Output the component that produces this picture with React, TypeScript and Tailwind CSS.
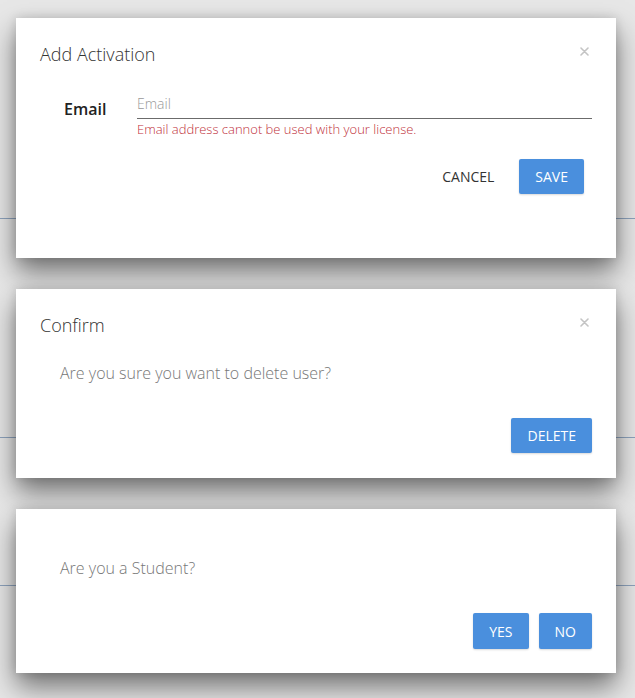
import React from 'react'

const font = { fontFamily: '"Open Sans", "Liberation Sans", sans-serif' }

function CloseX() {
  return (
    <button className="mt-[-6px] flex h-4 w-4 items-center justify-center">
      <svg width="9" height="9" viewBox="0 0 9 9">
        <path d="M1 1L8 8M8 1L1 8" stroke="#c4c4c4" strokeWidth="1.6" strokeLinecap="round" />
      </svg>
    </button>
  )
}

function Btn({ children, className = '' }: { children: React.ReactNode; className?: string }) {
  return (
    <button
      className={`h-[35px] rounded-[2px] bg-[#4a8fdd] px-4 text-[14px] uppercase text-white shadow-[0_1px_2px_rgba(0,0,0,0.15)] ${className}`}
    >
      {children}
    </button>
  )
}

function Card({ children, className = '' }: { children: React.ReactNode; className?: string }) {
  return (
    <div
      className={`relative z-10 mx-4 w-[600px] bg-white shadow-[0_14px_26px_rgba(0,0,0,0.5),0_0_10px_rgba(0,0,0,0.14)] ${className}`}
    >
      {children}
    </div>
  )
}

export default function App() {
  return (
    <div
      style={font}
      className="relative min-h-[698px] w-[635px] overflow-hidden bg-[#e7e7e7] pt-[18px]"
    >
      {/* page behind the dialogs */}
      <div className="absolute left-0 top-[218px] h-px w-full bg-[#8ea3bd]" />
      <div className="absolute left-0 top-[437px] h-px w-full bg-[#8ea3bd]" />
      <div className="absolute left-0 top-[585px] h-px w-full bg-[#8ea3bd]" />
      <div className="absolute left-0 top-[505px] flex w-full text-[14px] font-semibold text-[#6f87a6]">
        <span className="ml-[197px]">Shared With</span>
        <span className="ml-[160px]">Date Time</span>
      </div>

      <div className="flex flex-col gap-[31px]">
        {/* Add Activation */}
        <Card className="h-[240px] px-6 pt-6">
          <div className="flex items-center justify-between">
            <h2 className="text-[18px] font-light leading-6 text-[#333]">Add Activation</h2>
            <CloseX />
          </div>
          <div className="mt-[25px] flex pl-6">
            <label className="w-[73px] pt-[6px] text-[16px] font-semibold leading-6 text-[#222]">Email</label>
            <div className="flex-1">
              <input
                placeholder="Email"
                className="h-[27px] w-full border-b border-[#6b6b6b] pb-[3px] text-[14px] font-light leading-6 text-[#333] outline-none placeholder:text-[#999]"
              />
              <p className="text-[13px] font-light leading-[20px] text-[#c0303a]">
                Email address cannot be used with your license.
              </p>
            </div>
          </div>
          <div className="mt-[20px] flex items-center justify-end gap-[10px] pr-2">
            <button className="h-[35px] px-[15px] text-[14px] uppercase text-[#333]">Cancel</button>
            <Btn>Save</Btn>
          </div>
        </Card>

        {/* Confirm */}
        <Card className="h-[189px] pl-6 pr-6 pt-6">
          <div className="flex items-center justify-between">
            <h2 className="text-[18px] font-light leading-6 text-[#333]">Confirm</h2>
            <CloseX />
          </div>
          <p className="mt-6 pl-5 text-[16px] font-light leading-6 text-[#777]">Are you sure you want to delete user?</p>
          <div className="mt-[33px] flex justify-end">
            <Btn>Delete</Btn>
          </div>
        </Card>

        {/* Student */}
        <Card className="h-[164px] pl-11 pr-6 pt-[47px]">
          <p className="text-[16px] font-light leading-6 text-[#777]">Are you a Student?</p>
          <div className="mt-[33px] flex justify-end gap-[10px]">
            <Btn className="h-[36px]">Yes</Btn>
            <Btn className="h-[36px]">No</Btn>
          </div>
        </Card>
      </div>
    </div>
  )
}
